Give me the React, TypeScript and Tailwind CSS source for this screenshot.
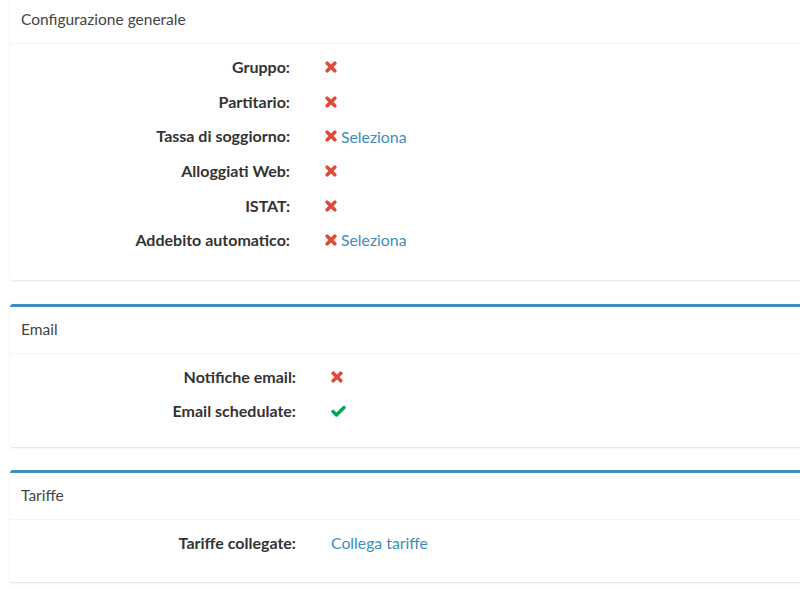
import React from "react";

type Row = { label: string; value: React.ReactNode };

function Cross() {
  return (
    <svg width="12" height="12" viewBox="0 0 12 12" className="inline-block shrink-0">
      <path d="M2.2 2.2 L9.8 9.8 M9.8 2.2 L2.2 9.8" stroke="#dd4b39" strokeWidth="3.6" strokeLinecap="round" />
    </svg>
  );
}

function Check() {
  return (
    <svg width="15" height="12" viewBox="0 0 15 12" className="inline-block shrink-0">
      <path d="M2 6.5 L5.5 10 L13 2.5" stroke="#00a65a" strokeWidth="3.4" fill="none" strokeLinecap="round" strokeLinejoin="round" />
    </svg>
  );
}

function Link({ children }: { children: React.ReactNode }) {
  return <a className="text-[#3c8dbc] cursor-pointer">{children}</a>;
}

function Box({
  title,
  rows,
  labelWidth,
  bodyClass,
  className,
}: {
  title: string;
  rows: Row[];
  labelWidth: string;
  bodyClass: string;
  className?: string;
}) {
  return (
    <div
      className={`ml-[10px] -mr-[20px] bg-white border-t-[3px] border-[#3c8dbc] rounded-[3px] shadow-[0_1px_2px_rgba(0,0,0,0.12)] ${className ?? ""}`}
    >
      <div className="h-[47px] px-[11px] flex items-center border-b border-[#f4f4f4] text-[15.5px] text-[#444]">
        {title}
      </div>
      <div className={bodyClass}>
        {rows.map((r) => (
          <div key={r.label} className="h-[34.6px] flex items-center">
            <div className={`${labelWidth} text-right font-bold text-[16px] text-[#333]`}>{r.label}</div>
            <div className="pl-[35px] flex items-center gap-[4px] text-[15.8px]">{r.value}</div>
          </div>
        ))}
      </div>
    </div>
  );
}

export default function App() {
  const sel = (
    <>
      <Cross />
      <Link>Seleziona</Link>
    </>
  );

  return (
    <div
      className="w-[800px] h-[589px] overflow-hidden bg-white"
      style={{ fontFamily: "Lato, 'Noto Sans', sans-serif" }}
    >
      <Box
        className="-mt-[6px] mb-[24px]"
        title="Configurazione generale"
        labelWidth="w-[280px]"
        bodyClass="pt-[6px] pb-[22px]"
        rows={[
          { label: "Gruppo:", value: <Cross /> },
          { label: "Partitario:", value: <Cross /> },
          { label: "Tassa di soggiorno:", value: sel },
          { label: "Alloggiati Web:", value: <Cross /> },
          { label: "ISTAT:", value: <Cross /> },
          { label: "Addebito automatico:", value: sel },
        ]}
      />
      <Box
        className="mb-[23px]"
        title="Email"
        labelWidth="w-[286px]"
        bodyClass="pt-[6px] pb-[18px]"
        rows={[
          { label: "Notifiche email:", value: <Cross /> },
          { label: "Email schedulate:", value: <Check /> },
        ]}
      />
      <Box
        title="Tariffe"
        labelWidth="w-[286px]"
        bodyClass="pt-[6px] pb-[22px]"
        rows={[{ label: "Tariffe collegate:", value: <Link>Collega tariffe</Link> }]}
      />
    </div>
  );
}
